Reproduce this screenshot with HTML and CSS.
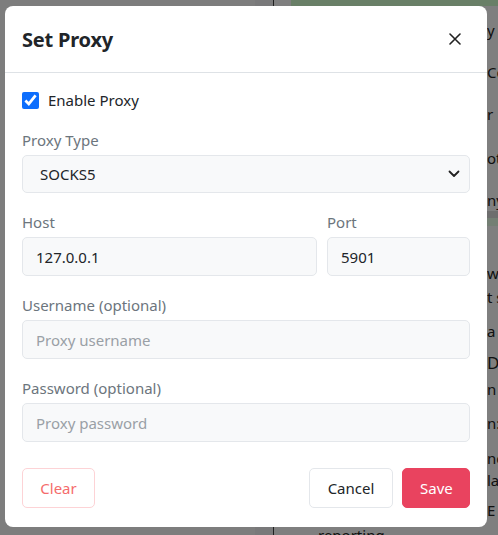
FILE: index.html
```html
<!DOCTYPE html>
<html lang="en">
<head>
<meta charset="utf-8">
<title>Set Proxy</title>
<link rel="stylesheet" href="styles.css">
</head>
<body>
<div class="page">
  <div class="side"></div>
  <div class="strip"></div>
  <div class="rule"></div>
  <div class="gutter"></div>
  <div class="main">
    <div class="topband"></div>
    <div class="lines">
      <p class="ln l1">y</p>
      <p class="ln l2">Co</p>
      <p class="ln l3">r</p>
      <p class="ln l4">ot</p>
      <p class="ln l5">ny</p>
      <div class="band"><div class="band-top"></div><div class="band-bottom"></div></div>
      <p class="ln l6">wi</p>
      <p class="ln l7">t s</p>
      <p class="ln l8">a</p>
      <p class="ln l9">D</p>
      <p class="ln l10">n</p>
      <p class="ln l11">n:</p>
      <p class="ln l12">nc</p>
      <p class="ln l13">la</p>
      <p class="ln l14">E</p>
      <p class="ln last">reporting</p>
    </div>
  </div>
</div>
<div class="overlay"></div>
<div class="modal">
  <div class="modal-header">
    <h2 class="title">Set Proxy</h2>
    <button class="close" aria-label="Close">
      <svg width="12" height="12" viewBox="0 0 12 12"><path d="M1 1 L11 11 M11 1 L1 11" stroke="#222" stroke-width="1.6" stroke-linecap="round" fill="none"/></svg>
    </button>
  </div>
  <div class="modal-body">
    <label class="check-row"><input type="checkbox" checked class="check"> <span>Enable Proxy</span></label>
    <div class="field">
      <div class="label">Proxy Type</div>
      <div class="select">
        <span>SOCKS5</span>
        <svg width="12" height="8" viewBox="0 0 12 8"><path d="M1.5 1.5 L6 6 L10.5 1.5" stroke="#222" stroke-width="1.8" fill="none" stroke-linecap="round" stroke-linejoin="round"/></svg>
      </div>
    </div>
    <div class="field-row">
      <div class="field grow">
        <div class="label">Host</div>
        <div class="input">127.0.0.1</div>
      </div>
      <div class="field port">
        <div class="label">Port</div>
        <div class="input">5901</div>
      </div>
    </div>
    <div class="field">
      <div class="label">Username (optional)</div>
      <div class="input placeholder">Proxy username</div>
    </div>
    <div class="field">
      <div class="label">Password (optional)</div>
      <div class="input placeholder">Proxy password</div>
    </div>
    <div class="footer">
      <button class="btn clear">Clear</button>
      <div class="spacer"></div>
      <button class="btn cancel">Cancel</button>
      <button class="btn save">Save</button>
    </div>
  </div>
</div>
</body>
</html>
```
FILE: styles.css
```css
* { box-sizing: border-box; }
html, body { margin: 0; padding: 0; }
body {
  width: 498px;
  height: 535px;
  overflow: hidden;
  font-family: "Noto Sans", "Open Sans", sans-serif;
  background: #7f7f7f;
  position: relative;
}
.page {
  display: flex;
  height: 535px;
  background: #ffffff;
}
.side { width: 255px; flex-shrink: 0; background: #fbfbfb; }
.strip { width: 18px; flex-shrink: 0; background: #f2f2f4; }
.rule { width: 1px; flex-shrink: 0; background: #404040; }
.gutter { width: 17px; flex-shrink: 0; background: #ffffff; }
.main { flex: 1; min-width: 0; display: flex; flex-direction: column; overflow: hidden; }
.topband { height: 6px; flex-shrink: 0; background: #d3ffcf; }
.lines { display: flex; flex-direction: column; font-size: 15px; color: #222; }
.ln { margin: 0; padding-left: 196px; line-height: 22px; height: 22px; white-space: nowrap; flex-shrink: 0; }
.l1 { margin-top: 13px; }
.l2 { margin-top: 20px; }
.l3 { margin-top: 20px; }
.l4 { margin-top: 22px; }
.l5 { margin-top: 20px; }
.band { display: flex; flex-direction: column; flex-shrink: 0; }
.band-top { height: 7px; background: #dcdcdc; margin-left: 180px; }
.band-bottom { height: 8px; background: #e8ffe8; margin-left: 180px; }
.l6 { margin-top: 36px; }
.l7 { margin-top: 2px; }
.l8 { margin-top: 12px; }
.l9 { margin-top: 10px; font-size: 17px; }
.l10 { margin-top: 4px; }
.l11 { margin-top: 12px; }
.l12 { margin-top: 13px; }
.l13 { margin-top: 0px; }
.l14 { margin-top: 8px; }
.last { padding-left: 27px; margin-top: 3px; }

.overlay {
  position: absolute;
  inset: 0;
  background: rgba(0, 0, 0, 0.5);
}

.modal {
  position: absolute;
  left: 5px;
  top: 6px;
  width: 482px;
  height: 521px;
  background: #ffffff;
  border-radius: 8px;
  color: #212529;
}
.modal-header {
  height: 67px;
  padding: 0 17px;
  display: flex;
  align-items: center;
  justify-content: space-between;
  border-bottom: 1px solid #dee2e6;
}
.title {
  margin: 0;
  font-size: 20px;
  font-weight: 700;
  letter-spacing: -0.2px;
  padding-top: 1px;
}
.close {
  border: 0;
  background: transparent;
  padding: 0;
  margin-right: 9px;
  width: 12px;
  height: 12px;
  display: flex;
}
.modal-body {
  padding: 16px 17px 0 17px;
  font-size: 15px;
}
.check-row {
  display: flex;
  align-items: center;
  gap: 9px;
  height: 22px;
  color: #212529;
}
.check {
  margin: 0;
  width: 17px;
  height: 17px;
  accent-color: #0d6efd;
}
.field { display: flex; flex-direction: column; margin-top: 18px; }
.field-row { display: flex; gap: 10px; }
.field-row .field { margin-top: 18px; }
.grow { flex: 1; }
.port { width: 143px; }
.label {
  color: #6c757d;
  line-height: 22px;
  margin-bottom: 4px;
}
.select, .input {
  height: 39px;
  background: #f8f9fa;
  border: 1px solid #e4e7eb;
  border-radius: 5px;
  display: flex;
  align-items: center;
  font-size: 15px;
  color: #212529;
}
.select {
  height: 38px;
  padding: 0 9px 0 17px;
  justify-content: space-between;
}
.input { padding: 0 13px; }
.placeholder { color: #9aa0a6; }
.footer {
  display: flex;
  align-items: center;
  margin-top: 26px;
  gap: 9px;
}
.spacer { flex: 1; }
.btn {
  height: 40px;
  border-radius: 5px;
  font-family: "Noto Sans", "Open Sans", sans-serif;
  font-size: 15px;
  padding: 0 17px;
  background: #ffffff;
  border: 1px solid #e4e7eb;
  color: #212529;
}
.clear { color: #f56c6c; border-color: #fdd3d6; width: 73px; }
.cancel { width: 84px; }
.save { background: #e9435f; border-color: #e9435f; color: #ffffff; width: 68px; }
```
